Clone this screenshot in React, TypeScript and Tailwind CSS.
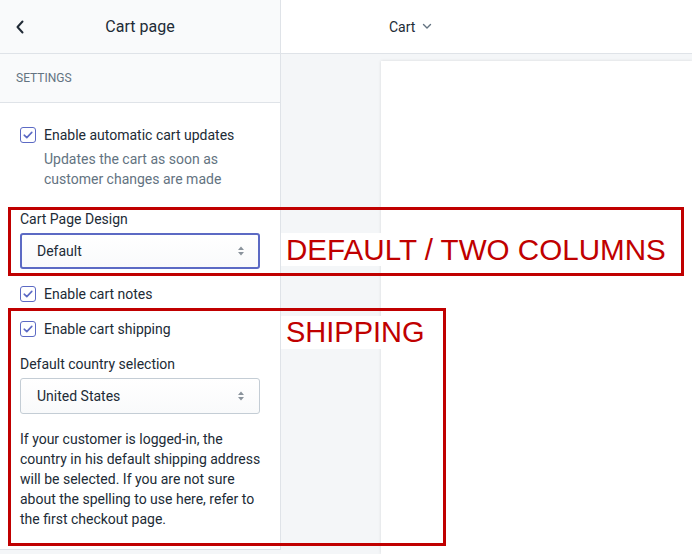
import React from 'react'

function Checkbox() {
  return (
    <span className="w-4 h-4 shrink-0 rounded-[3px] border border-[#5c6ac4] bg-white flex items-center justify-center">
      <svg width="10" height="8" viewBox="0 0 10 8" fill="none">
        <path d="M1.2 4.2 L3.8 6.6 L8.8 1.4" stroke="#5c6ac4" strokeWidth="1.6" strokeLinecap="round" strokeLinejoin="round" />
      </svg>
    </span>
  )
}

function SelectArrows() {
  return (
    <svg width="8" height="12" viewBox="0 0 8 12" fill="#8a939c">
      <path d="M4 1.5 L7 5 H1 Z" />
      <path d="M4 10.5 L7 7 H1 Z" />
    </svg>
  )
}

function Select({ value, focused }: { value: string; focused?: boolean }) {
  return (
    <div
      className={
        focused
          ? 'h-9 w-[240px] rounded-[3px] border-2 border-[#5c6ac4] bg-gradient-to-b from-white to-[#f9fafb] flex items-center justify-between pl-[15px] pr-[13px]'
          : 'h-9 w-[240px] rounded-[3px] border border-[#c4cdd5] bg-gradient-to-b from-white to-[#f9fafb] flex items-center justify-between pl-4 pr-[14px]'
      }
    >
      <span className="text-sm text-[#212b36]">{value}</span>
      <SelectArrows />
    </div>
  )
}

export default function App() {
  return (
    <div className="relative w-[692px] h-[554px] bg-[#f4f6f8] flex overflow-hidden font-['Roboto',sans-serif]">
      {/* sidebar */}
      <aside className="w-[281px] h-[550px] shrink-0 bg-white border-r border-b border-[#dfe3e8] flex flex-col">
        <div className="h-[54px] bg-[#f9fafb] border-b border-[#dfe3e8] flex items-center relative">
          <svg className="absolute left-[15px]" width="10" height="14" viewBox="0 0 10 14" fill="none">
            <path d="M7.5 1.5 L2.5 7 L7.5 12.5" stroke="#212b36" strokeWidth="2" strokeLinecap="round" strokeLinejoin="round" />
          </svg>
          <span className="w-full text-center text-base text-[#212b36]">Cart page</span>
        </div>
        <div className="h-[49px] bg-[#f9fafb] border-b border-[#dfe3e8] flex items-center px-4">
          <span className="text-xs uppercase text-[#637381]">Settings</span>
        </div>

        <div className="px-5 pt-[22px] text-sm leading-5 text-[#212b36]">
          <div className="flex items-start gap-2">
            <span className="mt-[2px]"><Checkbox /></span>
            <div>
              <div>Enable automatic cart updates</div>
              <div className="mt-1 text-[#637381]">
                Updates the cart as soon as
                <br />
                customer changes are made
              </div>
            </div>
          </div>

          <div className="mt-5">Cart Page Design</div>
          <div className="mt-1">
            <Select value="Default" focused />
          </div>

          <div className="mt-[15px] flex items-center gap-2">
            <Checkbox />
            <span>Enable cart notes</span>
          </div>
          <div className="mt-[15px] flex items-center gap-2">
            <Checkbox />
            <span>Enable cart shipping</span>
          </div>

          <div className="mt-[15px]">Default country selection</div>
          <div className="mt-1">
            <Select value="United States" />
          </div>

          <p className="mt-[15px] w-[252px] text-[#212b36]">
            If your customer is logged-in, the country in his default shipping address will be selected. If you are not sure about the spelling to use here, refer to the first checkout page.
          </p>
        </div>
      </aside>

      {/* preview */}
      <main className="flex-1 flex flex-col">
        <div className="h-[54px] shrink-0 bg-white border-b border-[#dfe3e8] flex items-center pl-[108px]">
          <span className="text-sm text-[#212b36]">Cart</span>
          <svg className="ml-[7px]" width="10" height="7" viewBox="0 0 10 7" fill="none">
            <path d="M1.5 1.5 L5 5 L8.5 1.5" stroke="#637381" strokeWidth="1.4" strokeLinecap="round" strokeLinejoin="round" />
          </svg>
        </div>
        <div className="flex-1 flex pl-[100px] pt-[7px]">
          <div className="flex-1 bg-white shadow-[0_0_3px_rgba(0,0,0,0.12)]" />
        </div>
      </main>

      {/* annotations */}
      <div className="absolute left-[8px] top-[207px] w-[676px] h-[69px] border-[3px] border-[#c00000]" />
      <div className="absolute left-[8px] top-[308px] w-[438px] h-[238px] border-[3px] border-[#c00000]" />
      <span className="absolute left-[281px] top-[233px] bg-white pl-[5px] pr-1 leading-[33px] text-[29.6px] text-[#c00000] font-['Liberation_Sans',Arial,sans-serif]">
        DEFAULT / TWO COLUMNS
      </span>
      <span className="absolute left-[281px] top-[316px] bg-white pl-[5px] pr-1 leading-[33px] text-[29px] text-[#c00000] font-['Liberation_Sans',Arial,sans-serif]">
        SHIPPING
      </span>
    </div>
  )
}
